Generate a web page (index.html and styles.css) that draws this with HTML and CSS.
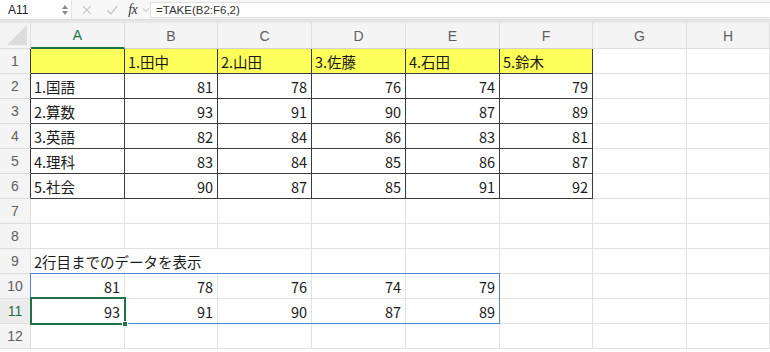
FILE: index.html
```html
<!DOCTYPE html>
<html lang="ja">
<head>
<meta charset="utf-8">
<title>TAKE</title>
<link rel="stylesheet" href="styles.css">
</head>
<body>
<div class="toolbar">
  <div class="namebox">
    <span class="name">A11</span>
    <span class="spin"><span class="up"></span><span class="down"></span></span>
  </div>
  <div class="tools">
    <svg class="ico" width="12" height="12" viewBox="0 0 12 12"><path d="M2 2L10 10M10 2L2 10" stroke="#c4c4c4" stroke-width="1.3" fill="none"/></svg>
    <svg class="ico" width="13" height="12" viewBox="0 0 13 12"><path d="M1.5 6.5L5 10L11.5 2" stroke="#c4c4c4" stroke-width="1.3" fill="none"/></svg>
    <span class="fx">fx</span>
    <svg class="chev" width="8" height="6" viewBox="0 0 8 6"><path d="M1 1.5L4 4.5L7 1.5" stroke="#b5b5b5" stroke-width="1" fill="none"/></svg>
  </div>
  <div class="formula">=TAKE(B2:F6,2)</div>
</div>
<div class="strip"></div>
<div class="sheet">
  <div class="hd corner"><span class="tri"></span></div>
  <div class="hd col sel">A</div><div class="hd col dk">B</div><div class="hd col dk">C</div><div class="hd col dk">D</div><div class="hd col dk">E</div><div class="hd col dk">F</div><div class="hd col">G</div><div class="hd col">H</div>

  <div class="hd row dk">1</div>
  <div class="c t y"></div><div class="c t y">1.田中</div><div class="c t y">2.山田</div><div class="c t y">3.佐藤</div><div class="c t y">4.石田</div><div class="c t y">5.鈴木</div><div class="c"></div><div class="c"></div>

  <div class="hd row dk">2</div>
  <div class="c t">1.国語</div><div class="c t n">81</div><div class="c t n">78</div><div class="c t n">76</div><div class="c t n">74</div><div class="c t n">79</div><div class="c"></div><div class="c"></div>

  <div class="hd row dk">3</div>
  <div class="c t">2.算数</div><div class="c t n">93</div><div class="c t n">91</div><div class="c t n">90</div><div class="c t n">87</div><div class="c t n">89</div><div class="c"></div><div class="c"></div>

  <div class="hd row dk">4</div>
  <div class="c t">3.英語</div><div class="c t n">82</div><div class="c t n">84</div><div class="c t n">86</div><div class="c t n">83</div><div class="c t n">81</div><div class="c"></div><div class="c"></div>

  <div class="hd row dk">5</div>
  <div class="c t">4.理科</div><div class="c t n">83</div><div class="c t n">84</div><div class="c t n">85</div><div class="c t n">86</div><div class="c t n">87</div><div class="c"></div><div class="c"></div>

  <div class="hd row dk">6</div>
  <div class="c t">5.社会</div><div class="c t n">90</div><div class="c t n">87</div><div class="c t n">85</div><div class="c t n">91</div><div class="c t n">92</div><div class="c"></div><div class="c"></div>

  <div class="hd row">7</div>
  <div class="c"></div><div class="c"></div><div class="c"></div><div class="c"></div><div class="c"></div><div class="c"></div><div class="c"></div><div class="c"></div>

  <div class="hd row">8</div>
  <div class="c"></div><div class="c"></div><div class="c"></div><div class="c"></div><div class="c"></div><div class="c"></div><div class="c"></div><div class="c"></div>

  <div class="hd row">9</div>
  <div class="c span">2行目までのデータを表示</div><div class="c"></div><div class="c"></div><div class="c"></div><div class="c"></div><div class="c"></div>

  <div class="hd row">10</div>
  <div class="c n">81</div><div class="c n">78</div><div class="c n">76</div><div class="c n">74</div><div class="c n">79</div><div class="c"></div><div class="c"></div><div class="c"></div>

  <div class="hd row rsel">11</div>
  <div class="c n">93</div><div class="c n">91</div><div class="c n">90</div><div class="c n">87</div><div class="c n">89</div><div class="c"></div><div class="c"></div><div class="c"></div>

  <div class="hd row">12</div>
  <div class="c"></div><div class="c"></div><div class="c"></div><div class="c"></div><div class="c"></div><div class="c"></div><div class="c"></div><div class="c"></div>

  <div class="range"></div>
  <div class="active"></div>
  <div class="handle"></div>
</div>
</body>
</html>
```

FILE: styles.css
```css
html, body {
  margin: 0;
  padding: 0;
  background: #ffffff;
}
body {
  width: 770px;
  height: 352px;
  overflow: hidden;
  font-family: "Noto Sans CJK JP", "Noto Sans", sans-serif;
}
.toolbar {
  height: 19px;
  display: flex;
  align-items: center;
  background: #f7f7f7;
  border-bottom: 1px solid #dcdcdc;
}
.namebox {
  width: 72px;
  height: 19px;
  box-sizing: border-box;
  background: #ffffff;
  display: flex;
  align-items: center;
  justify-content: space-between;
  padding: 0 3px 0 8px;
  border-right: 1px solid #e2e2e2;
}
.name {
  font-family: "Liberation Sans", sans-serif;
  font-size: 12px;
  color: #222;
}
.spin {
  display: flex;
  flex-direction: column;
  gap: 2px;
}
.up, .down {
  width: 0;
  height: 0;
  border-left: 3.5px solid transparent;
  border-right: 3.5px solid transparent;
}
.up { border-bottom: 4px solid #8a8a8a; }
.down { border-top: 4px solid #8a8a8a; }
.tools {
  display: flex;
  align-items: center;
  padding-left: 9px;
  gap: 13px;
  width: 69px;
}
.fx {
  font-family: "Liberation Serif", serif;
  font-style: italic;
  font-size: 14px;
  color: #333;
  margin-left: -3px;
  letter-spacing: -0.5px;
}
.chev {
  margin-left: -8px;
}
.formula {
  flex: 1;
  height: 16px;
  margin-top: 1px;
  box-sizing: border-box;
  background: #ffffff;
  border: 1px solid #e0e0e0;
  border-right: none;
  font-family: "Liberation Sans", sans-serif;
  font-size: 11.5px;
  color: #333;
  line-height: 14px;
  padding-left: 5px;
}
.strip {
  height: 3px;
  background: #e6e6e6;
}
.sheet {
  position: relative;
  display: grid;
  grid-template-columns: 31px 94px 93px 94px 94px 94px 93px 94px 83px;
  grid-template-rows: 26px repeat(12, 25px);
}
.sheet > div {
  box-sizing: border-box;
}
.hd {
  background: #f4f4f4;
  color: #5f5f5f;
  font-family: "Liberation Sans", "Noto Sans", sans-serif;
  font-size: 14px;
  display: flex;
  align-items: center;
  justify-content: center;
  border-right: 1px solid #dedede;
  border-bottom: 1px solid #dedede;
}
.corner {
  position: relative;
}
.tri {
  position: absolute;
  right: 3px;
  bottom: 3px;
  width: 20px;
  height: 20px;
  background: #dcdcdc;
  clip-path: polygon(100% 0, 100% 100%, 0 100%);
}
.col.sel {
  color: #1f7145;
  border-bottom: 2px solid #1f7145;
}
.col.dk {
  border-bottom-color: #d0d0d0;
}
.row.dk {
  border-right: 1px solid #3a3a3a;
}
.row.rsel {
  color: #1f7145;
  background: #ececec;
}
.c {
  border-right: 1px solid #e1e1e1;
  border-bottom: 1px solid #e1e1e1;
  font-size: 14.5px;
  color: #1a1a1a;
  display: flex;
  align-items: center;
  padding: 0 4px 0 3px;
  white-space: nowrap;
}
.c.t {
  border-right: 1px solid #3a3a3a;
  border-bottom: 1px solid #3a3a3a;
}
.c.y {
  background: #ffff5c;
}
.c.n {
  justify-content: flex-end;
}
.c.span {
  grid-column: span 3;
  overflow: visible;
}
.range {
  position: absolute;
  left: 30px;
  top: 250px;
  width: 470px;
  height: 51px;
  box-sizing: border-box;
  border: 1px solid #5585d8;
  pointer-events: none;
}
.active {
  position: absolute;
  left: 30px;
  top: 274px;
  width: 96px;
  height: 28px;
  box-sizing: border-box;
  border: 2px solid #1f7145;
}
.handle {
  position: absolute;
  left: 122px;
  top: 298px;
  width: 6px;
  height: 6px;
  box-sizing: border-box;
  background: #1f7145;
  border: 1px solid #ffffff;
}
```
